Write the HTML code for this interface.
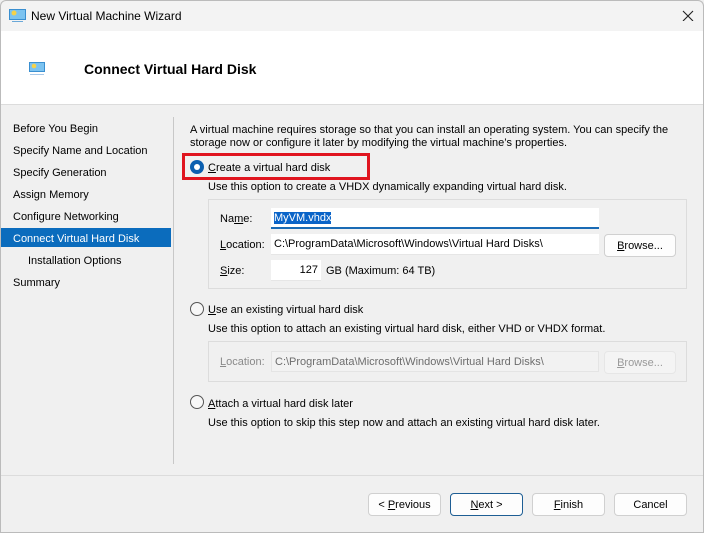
<!DOCTYPE html>
<html><head><style>
*{margin:0;padding:0;box-sizing:border-box}
body{width:704px;height:533px;overflow:hidden;font-family:"Liberation Sans",sans-serif;font-size:11px;color:#000;background:#f0f0f0;position:relative}
.a{position:absolute;white-space:nowrap;padding-top:1px}
.btn{position:absolute;height:23px;background:#fdfdfd;border:1px solid #d0d0d0;border-radius:4px;text-align:center;line-height:22px}
.radio{position:absolute;width:14px;height:14px;border:1px solid #555;border-radius:50%;background:#f7f7f7}
.tb{position:absolute;height:21px;background:#fff;border-bottom:1px solid #e6e6e6;padding-left:3px;line-height:21px}
u{text-decoration:underline}
</style></head><body>
<div class="a" style="left:0;top:0;width:704px;height:31px;background:#f3f3f3;border:1px solid #bbb;border-bottom:none;border-radius:6px 6px 0 0"></div>
<svg class="a" style="left:9px;top:8px" width="17" height="14"><rect x="0.5" y="0.5" width="16" height="10" fill="#7cc3f0" stroke="#3a8fd0"/><circle cx="5" cy="4" r="2.5" fill="#f5d24a"/><rect x="3" y="12" width="11" height="1.5" fill="#6aa8d8"/></svg>
<div class="a" style="left:31px;top:8px;font-size:12px">New Virtual Machine Wizard</div>
<svg class="a" style="left:682px;top:9px" width="12" height="12"><path d="M1 1L11 11M11 1L1 11" stroke="#222" stroke-width="1.1"/></svg>
<div class="a" style="left:0;top:31px;width:704px;height:74px;background:#fff;border-bottom:1px solid #dcdcdc"></div>
<svg class="a" style="left:29px;top:61px" width="16" height="14"><rect x="0.5" y="0.5" width="15" height="9" fill="#7cc3f0" stroke="#3a8fd0"/><circle cx="5" cy="4" r="2.3" fill="#f5d24a"/><rect x="1" y="12" width="14" height="1" fill="#a8c8e8"/></svg>
<div class="a" style="left:84px;top:60px;font-size:14px;font-weight:bold">Connect Virtual Hard Disk</div>
<div class="a" style="left:13px;top:122px">Before You Begin</div>
<div class="a" style="left:13px;top:144px">Specify Name and Location</div>
<div class="a" style="left:13px;top:166px">Specify Generation</div>
<div class="a" style="left:13px;top:188px">Assign Memory</div>
<div class="a" style="left:13px;top:210px">Configure Networking</div>
<div class="a" style="left:1px;top:228px;width:170px;height:19px;background:#0b6cbd"></div>
<div class="a" style="left:13px;top:232px;color:#fff">Connect Virtual Hard Disk</div>
<div class="a" style="left:28px;top:254px">Installation Options</div>
<div class="a" style="left:13px;top:276px">Summary</div>
<div class="a" style="left:173px;top:117px;width:1px;height:347px;background:#c8c8c8"></div>
<div class="a" style="left:190px;top:123px;line-height:13px">A virtual machine requires storage so that you can install an operating system. You can specify the<br>storage now or configure it later by modifying the virtual machine’s properties.</div>
<div class="a" style="left:182px;top:153px;width:188px;height:27px;border:3px solid #e0151f"></div>
<div class="radio" style="left:190px;top:160px;border:none;background:#0b5fb0"></div>
<div class="a" style="left:194px;top:164px;width:6px;height:6px;border-radius:50%;background:#fff"></div>
<div class="a" style="left:208px;top:161px"><u>C</u>reate a virtual hard disk</div>
<div class="a" style="left:208px;top:180px">Use this option to create a VHDX dynamically expanding virtual hard disk.</div>
<div class="a" style="left:208px;top:199px;width:479px;height:90px;border:1px solid #dcdcdc"></div>
<div class="a" style="left:220px;top:212px">Na<u>m</u>e:</div>
<div class="tb" style="left:271px;top:208px;width:328px;border-bottom:2px solid #1a6bb5"><span style="background:#0a64c8;color:#fff">MyVM.vhdx</span></div>
<div class="a" style="left:220px;top:238px"><u>L</u>ocation:</div>
<div class="tb" style="left:271px;top:234px;width:328px">C:\ProgramData\Microsoft\Windows\Virtual Hard Disks\</div>
<div class="btn" style="left:604px;top:234px;width:72px"><u>B</u>rowse...</div>
<div class="a" style="left:220px;top:264px"><u>S</u>ize:</div>
<div class="tb" style="left:271px;top:260px;width:50px;text-align:right;padding-right:3px">127</div>
<div class="a" style="left:326px;top:264px">GB (Maximum: 64 TB)</div>
<div class="radio" style="left:190px;top:302px"></div>
<div class="a" style="left:208px;top:303px"><u>U</u>se an existing virtual hard disk</div>
<div class="a" style="left:208px;top:322px">Use this option to attach an existing virtual hard disk, either VHD or VHDX format.</div>
<div class="a" style="left:208px;top:341px;width:479px;height:41px;border:1px solid #dcdcdc"></div>
<div class="a" style="left:220px;top:355px;color:#8a8a8a"><u>L</u>ocation:</div>
<div class="tb" style="left:271px;top:351px;width:328px;background:#f2f2f2;border:1px solid #e4e4e4;color:#6d6d6d">C:\ProgramData\Microsoft\Windows\Virtual Hard Disks\</div>
<div class="btn" style="left:604px;top:351px;width:72px;background:#f4f4f4;border-color:#e6e6e6;color:#9a9a9a"><u>B</u>rowse...</div>
<div class="radio" style="left:190px;top:395px"></div>
<div class="a" style="left:208px;top:397px"><u>A</u>ttach a virtual hard disk later</div>
<div class="a" style="left:208px;top:416px">Use this option to skip this step now and attach an existing virtual hard disk later.</div>
<div class="a" style="left:0;top:475px;width:704px;height:1px;background:#dcdcdc"></div>
<div class="btn" style="left:368px;top:493px;width:73px">&lt; <u>P</u>revious</div>
<div class="btn" style="left:450px;top:493px;width:73px;border-color:#1e5e94"><u>N</u>ext &gt;</div>
<div class="btn" style="left:532px;top:493px;width:73px"><u>F</u>inish</div>
<div class="btn" style="left:614px;top:493px;width:73px">Cancel</div>
<div class="a" style="left:0;top:31px;width:1px;height:502px;background:#bbb"></div>
<div class="a" style="left:703px;top:31px;width:1px;height:502px;background:#bbb"></div>
<div class="a" style="left:0;top:532px;width:704px;height:1px;background:#bbb"></div>
</body></html>
